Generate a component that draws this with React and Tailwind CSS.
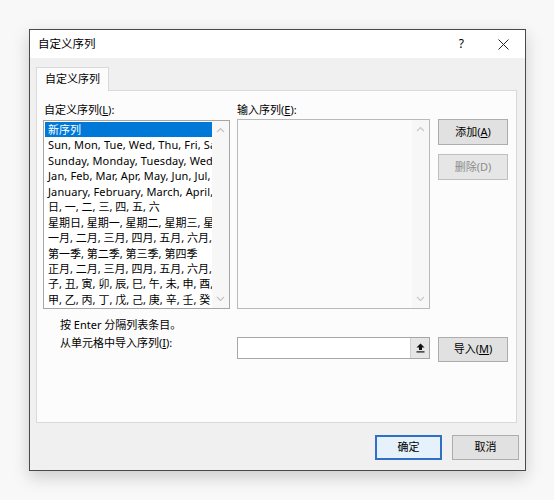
import React from "react";

const FONT = { fontFamily: '"Noto Sans", "Noto Sans CJK SC", sans-serif' };

function Chevron({ up = true, color = "#b9b9b9" }) {
  return (
    <svg width="9" height="6" viewBox="0 0 9 6" className="block">
      <path
        d={up ? "M1 5 L4.5 1.5 L8 5" : "M1 1 L4.5 4.5 L8 1"}
        fill="none"
        stroke={color}
        strokeWidth="1.1"
      />
    </svg>
  );
}

function ScrollBar({ color }) {
  return (
    <div className="flex w-[17px] flex-col items-center justify-between bg-[#f7f7f7] py-[6px]">
      <Chevron up color={color} />
      <Chevron up={false} color={color} />
    </div>
  );
}

const rows = [
  ["新序列", false],
  ["Sun, Mon, Tue, Wed, Thu, Fri, Sat", true],
  ["Sunday, Monday, Tuesday, Wednesday, Thursday", true],
  ["Jan, Feb, Mar, Apr, May, Jun, Jul, Aug", true],
  ["January, February, March, April, May", true],
  ["日, 一, 二, 三, 四, 五, 六", false],
  ["星期日, 星期一, 星期二, 星期三, 星期四", false],
  ["一月, 二月, 三月, 四月, 五月, 六月, 七月", false],
  ["第一季, 第二季, 第三季, 第四季", false],
  ["正月, 二月, 三月, 四月, 五月, 六月, 七月", false],
  ["子, 丑, 寅, 卯, 辰, 巳, 午, 未, 申, 酉, 戌, 亥", false],
  ["甲, 乙, 丙, 丁, 戊, 己, 庚, 辛, 壬, 癸", false],
];

function Btn({ children, disabled, primary, className = "" }) {
  return (
    <div
      className={
        "flex items-center justify-center " +
        (primary
          ? "border-2 border-[#2f6fc4] bg-[#e5f1fb] text-black "
          : "border border-[#adadad] bg-[#e1e1e1] ") +
        (disabled ? "border-[#bfbfbf] bg-[#e6e6e6] text-[#8c8c8c] " : "text-black ") +
        className
      }
    >
      {children}
    </div>
  );
}

export default function App() {
  return (
    <div
      className="h-[500px] w-[554px] bg-[#f8f8f8] pl-[29px] pt-[29px] text-[11px] text-black"
      style={FONT}
    >
      <div className="flex h-[442px] w-[497px] flex-col border border-[#4a4a4a] bg-[#f0f0f0] shadow-[0_6px_16px_rgba(0,0,0,0.18)]">
        {/* title bar */}
        <div className="flex h-[28px] items-center bg-white pl-[8px]">
          <span className="text-[11.5px]">自定义序列</span>
          <div className="ml-auto flex items-center">
            <span className="mr-[34px] text-[12px]">?</span>
            <svg width="11" height="11" viewBox="0 0 11 11" className="mr-[16px]">
              <path d="M0.5 0.5 L10.5 10.5 M10.5 0.5 L0.5 10.5" stroke="#222" strokeWidth="1" />
            </svg>
          </div>
        </div>

        {/* body */}
        <div className="flex flex-1 flex-col pl-[6px] pr-[8px] pt-[9px]">
          <div className="flex">
            <div className="relative z-10 -mb-px flex h-[24px] w-[73px] items-center justify-center border border-b-0 border-[#d9d9d9] bg-[#fcfcfc]">
              自定义序列
            </div>
          </div>
          <div className="h-[333px] border border-[#d9d9d9] bg-[#fcfcfc] pl-[6px] pt-[10px]">
            {/* labels */}
            <div className="flex h-[18px] items-center">
              <div className="w-[194px] pl-[1px]">
                自定义序列(<span className="underline">L</span>):
              </div>
              <div>
                输入序列(<span className="underline">E</span>):
              </div>
            </div>
            {/* boxes */}
            <div className="flex">
              <div className="mt-px flex h-[189px] w-[187px] border border-[#a6a6a6] bg-white">
                <div className="flex-1 overflow-hidden pl-px pt-px">
                  {rows.map(([r, latin], i) => (
                    <div
                      key={i}
                      className={
                        "h-[15.45px] whitespace-nowrap pl-[3px] leading-[15px] " +
                        (latin ? "tracking-[0.12px] " : "") +
                        (i === 0 ? "bg-[#0078d7] text-white" : "")
                      }
                    >
                      {r}
                    </div>
                  ))}
                </div>
                <ScrollBar color="#c2c2c2" />
              </div>
              <div className="ml-[7px] flex h-[190px] w-[193px] border border-[#b9b9b9] bg-[#fbfbfb]">
                <div className="flex-1" />
                <ScrollBar color="#c8c8c8" />
              </div>
              <div className="ml-[8px] flex flex-col">
                <Btn className="h-[26px] w-[70px]">
                  <span>
                    添加(<span className="underline">A</span>)
                  </span>
                </Btn>
                <Btn disabled className="mt-[9px] h-[26px] w-[70px]">
                  删除(D)
                </Btn>
              </div>
            </div>
            {/* hint */}
            <div className="ml-[17px] mt-[7px] h-[18px] leading-[18px]">
              按 Enter 分隔列表条目。
            </div>
            <div className="flex items-start">
              <div className="ml-[17px] h-[18px] w-[177px] leading-[18px]">
                从单元格中导入序列(<span className="underline">I</span>):
              </div>
              <div className="mt-[3px] flex h-[22px] w-[193px] border border-[#a6a6a6] bg-white">
                <div className="flex-1" />
                <div className="flex w-[19px] items-center justify-center border-l border-[#cfcfcf] bg-[#e6e6e6]">
                  <svg width="9" height="10" viewBox="0 0 9 10">
                    <path d="M4.5 0.5 L8.5 4.5 L6 4.5 L6 7 L3 7 L3 4.5 L0.5 4.5 Z" fill="#111" />
                    <rect x="0.5" y="8.3" width="8" height="1.2" fill="#111" />
                  </svg>
                </div>
              </div>
              <Btn className="ml-[8px] mt-[3px] h-[25px] w-[70px]">
                <span>
                  导入(<span className="underline">M</span>)
                </span>
              </Btn>
            </div>
          </div>

          {/* footer */}
          <div className="mt-[12px] flex justify-end">
            <Btn primary className="h-[25px] w-[67px]">
              确定
            </Btn>
            <Btn className="ml-[10px] mr-[-2px] h-[25px] w-[67px]">取消</Btn>
          </div>
        </div>
      </div>
    </div>
  );
}
